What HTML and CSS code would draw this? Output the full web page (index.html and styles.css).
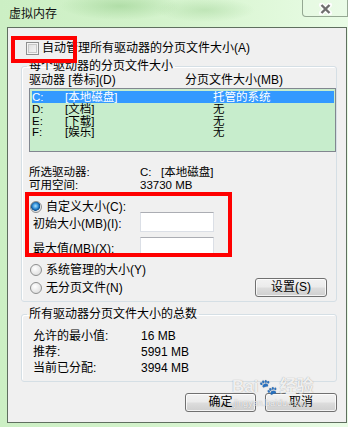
FILE: index.html
```html
<!DOCTYPE html>
<html lang="zh-CN">
<head>
    <meta charset="UTF-8">
    <title>虚拟内存</title>
    <link rel="stylesheet" href="styles.css">
</head>
<body>
    <div class="window">
        <!-- Title bar -->
        <div class="titlebar">
            <span class="title">虚拟内存</span>
            <div class="close">
                <svg width="13" height="12" viewBox="0 0 13 12">
                    <path d="M2.5 2 L10.5 10 M10.5 2 L2.5 10" stroke="#fdfdfd" stroke-width="5" stroke-linecap="square" fill="none"/>
                    <path d="M2.5 2 L10.5 10 M10.5 2 L2.5 10" stroke="#6e6e6e" stroke-width="2.4" fill="none"/>
                </svg>
            </div>
        </div>

        <!-- Dialog body -->
        <div class="client">
            <div class="check-row">
                <span class="checkbox"></span>
                <span>自动管理所有驱动器的分页文件大小(A)</span>
            </div>

            <fieldset class="group group-drives">
                <legend>每个驱动器的分页文件大小</legend>
                <div class="list-head">
                    <span class="head-drive">驱动器 [卷标](D)</span>
                    <span>分页文件大小(MB)</span>
                </div>
                <ul class="drive-list">
                    <li class="selected"><span class="c1">C:</span><span class="c2">[本地磁盘]</span><span>托管的系统</span></li>
                    <li><span class="c1">D:</span><span class="c2">[文档]</span><span>无</span></li>
                    <li><span class="c1">E:</span><span class="c2">[下载]</span><span>无</span></li>
                    <li><span class="c1">F:</span><span class="c2">[娱乐]</span><span>无</span></li>
                </ul>

                <div class="info-row first"><span class="info-label">所选驱动器:</span><span>C:&nbsp;&nbsp;&nbsp;[本地磁盘]</span></div>
                <div class="info-row second"><span class="info-label">可用空间:</span><span>33730 MB</span></div>

                <div class="radio-row custom">
                    <span class="radio on"></span>
                    <span>自定义大小(C):</span>
                </div>
                <div class="field-row first">
                    <span class="field-label">初始大小(MB)(I):</span>
                    <span class="textbox"></span>
                </div>
                <div class="field-row">
                    <span class="field-label">最大值(MB)(X):</span>
                    <span class="textbox"></span>
                </div>

                <div class="radio-row system">
                    <span class="radio"></span>
                    <span>系统管理的大小(Y)</span>
                </div>
                <div class="radio-row none">
                    <div class="radio-left">
                        <span class="radio"></span>
                        <span>无分页文件(N)</span>
                    </div>
                    <button class="btn btn-set">设置(S)</button>
                </div>
            </fieldset>

            <fieldset class="group group-total">
                <legend>所有驱动器分页文件大小的总数</legend>
                <div class="total-row first"><span class="total-label">允许的最小值:</span><span>16 MB</span></div>
                <div class="total-row"><span class="total-label">推荐:</span><span>5991 MB</span></div>
                <div class="total-row"><span class="total-label">当前已分配:</span><span>3994 MB</span></div>
            </fieldset>

            <div class="actions">
                <button class="btn btn-ok">确定</button>
                <button class="btn btn-cancel">取消</button>
            </div>
        </div>
    </div>

    <!-- Annotation boxes and watermark -->
    <div class="mark mark-auto"></div>
    <div class="mark mark-custom"></div>
    <div class="watermark">
        <span class="wm-logo">Bai<span class="paw">&#x1F43E;</span>经验</span>
        <span class="wm-url">jingyan.baidu.com</span>
    </div>
</body>
</html>
```

FILE: styles.css
```css
* {
    box-sizing: border-box;
}
body {
    margin: 0;
    width: 348px;
    height: 427px;
    overflow: hidden;
    position: relative;
    font-family: "Liberation Sans", "Noto Sans CJK SC", sans-serif;
    font-size: 12px;
    color: #000;
}
.window {
    height: 427px;
    padding: 0 1px 4px 7px;
    display: flex;
    flex-direction: column;
    background:
        radial-gradient(ellipse 60px 14px at 120px 6px, rgba(150, 205, 140, 0.55), transparent),
        radial-gradient(ellipse 50px 12px at 205px 10px, rgba(160, 210, 150, 0.45), transparent),
        linear-gradient(90deg, #ccefc4 0%, #d2f2ca 40%, #dff8d9 75%, #e9fce6 100%);
}
.titlebar {
    height: 27px;
    display: flex;
    justify-content: space-between;
    align-items: flex-start;
}
.title {
    margin: 8px 0 0 2px;
    line-height: 12px;
    color: #111;
}
.close {
    width: 46px;
    height: 18px;
    margin: -1px -1px 0 0;
    padding-top: 3px;
    display: flex;
    justify-content: center;
    align-items: flex-start;
    border: 1px solid rgba(80, 100, 80, 0.55);
    border-radius: 0 0 0 4px;
    background: rgba(235, 250, 232, 0.35);
}
.client {
    flex: 1;
    background: #f0f0f0;
    border: 1px solid #5f6f5f;
}
.check-row {
    margin: 14px 0 0 18px;
    height: 13px;
    line-height: 13px;
    display: flex;
    align-items: center;
    gap: 3px;
}
.checkbox {
    width: 13px;
    height: 13px;
    border: 1px solid #8e8f8f;
    background: linear-gradient(135deg, #dcdcdc, #f8f8f8);
    box-shadow: inset 0 0 0 1px #f4f4f4, inset 0 0 0 2px #c8c8c8;
}
.group {
    width: 316px;
    min-width: 0;
    margin: 5px 0 0 13px;
    padding: 0 0 4px 7px;
    border: 1px solid #d5dfe5;
    border-radius: 3px;
    box-shadow: inset 1px 1px 0 #fff;
}
.group legend {
    padding: 0 2px;
    margin-left: -2px;
    line-height: 12px;
}
.list-head {
    margin-top: 2px;
    line-height: 12px;
    display: flex;
}
.head-drive {
    width: 156px;
}
.drive-list {
    list-style: none;
    margin: 2px 0 0;
    padding: 2px 1px 0 2px;
    height: 64px;
    border: 1px solid #828790;
    background: #c7edcc;
}
.drive-list li {
    display: flex;
    height: 11.5px;
    line-height: 12px;
    font-size: 11.5px;
}
.drive-list li.selected {
    height: 12px;
    background: #3399ff;
    color: #fff;
}
.c1 {
    width: 33px;
}
.c2 {
    width: 148px;
}
.info-row {
    display: flex;
    line-height: 12px;
    font-size: 11.5px;
}
.info-row.first {
    margin-top: 14px;
}
.info-row.second {
    margin-top: 1px;
}
.info-label {
    width: 111px;
}
.radio-row {
    display: flex;
    align-items: center;
    gap: 4px;
    height: 12px;
    line-height: 12px;
    padding-left: 1px;
}
.radio-row.custom {
    margin-top: 10px;
}
.radio-row.system {
    margin-top: 7px;
}
.radio-row.none {
    margin-top: 2px;
    height: 19px;
    justify-content: space-between;
}
.radio-left {
    display: flex;
    align-items: center;
    gap: 4px;
}
.radio {
    width: 12px;
    height: 12px;
    border-radius: 50%;
    border: 1px solid #8e8f8f;
    background: radial-gradient(circle at 40% 35%, #ffffff, #e2e2e2 70%);
}
.radio.on {
    background: radial-gradient(circle at 45% 40%, #a8e2ff 0, #2e8bd6 35%, #0d4d8a 55%, #e8e8e8 62%, #d4d4d4 100%);
}
.field-row {
    display: flex;
    align-items: center;
    height: 20px;
    padding-left: 4px;
    margin-top: 5px;
}
.field-row.first {
    margin-top: -1px;
}
.field-label {
    width: 107px;
}
.textbox {
    width: 74px;
    height: 20px;
    background: #fff;
    border: 1px solid #dbdfe6;
    border-top-color: #abadb3;
}
.btn {
    height: 19px;
    padding: 0;
    font: inherit;
    line-height: 17px;
    color: #000;
    border: 1px solid #707070;
    border-radius: 3px;
    background: linear-gradient(#f2f2f2 0%, #ebebeb 48%, #dddddd 52%, #cfcfcf 100%);
    box-shadow: inset 0 0 0 1px rgba(255, 255, 255, 0.75);
}
.btn-set {
    width: 72px;
    margin-right: 9px;
}
.group-total {
    margin-top: 6px;
    padding-bottom: 5px;
}
.total-row {
    display: flex;
    line-height: 16px;
    padding-left: 4px;
}
.total-row.first {
    margin-top: 8px;
}
.total-label {
    width: 108px;
}
.actions {
    margin-top: 11px;
    padding-right: 9px;
    display: flex;
    justify-content: flex-end;
    gap: 9px;
}
.btn-ok {
    width: 71px;
}
.btn-cancel {
    width: 72px;
}
.mark {
    position: absolute;
    border: 4px solid #ff0000;
}
.mark-auto {
    left: 11px;
    top: 36px;
    width: 66px;
    height: 27px;
}
.mark-custom {
    left: 25px;
    top: 192px;
    width: 207px;
    height: 65px;
}
.watermark {
    position: absolute;
    left: 232px;
    top: 376px;
    display: flex;
    flex-direction: column;
    color: rgba(255, 255, 255, 0.85);
    text-shadow: 0 0 1px rgba(110, 110, 110, 0.7);
    pointer-events: none;
}
.wm-logo {
    font-size: 17px;
    font-weight: bold;
    line-height: 22px;
}
.wm-logo .paw {
    font-size: 15px;
    margin: 0 1px;
}
.wm-url {
    font-size: 9px;
    line-height: 10px;
    padding-left: 2px;
}
```
